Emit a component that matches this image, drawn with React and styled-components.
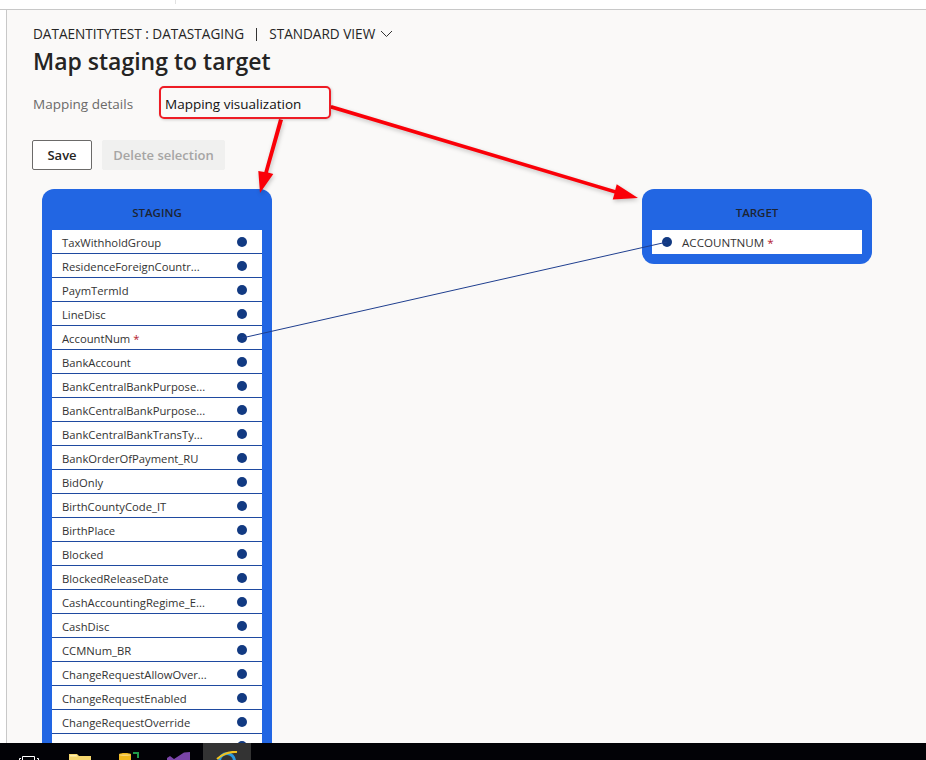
import React from "react"
import styled, { createGlobalStyle } from "styled-components"

const GlobalStyle = createGlobalStyle`
  html, body {
    margin: 0;
    padding: 0;
    background: #fff;
    font-family: "Open Sans", "Noto Sans", sans-serif;
  }
`

const Screen = styled.div`
  width: 926px;
  height: 760px;
  position: relative;
  overflow: hidden;
  display: flex;
  flex-direction: column;
  background: #fff;
`

const TopStrip = styled.div`
  height: 9px;
  flex-shrink: 0;
  padding-left: 175px;
  box-sizing: content-box;
  border-bottom: 1px solid #c8c8c8;
`

const TopTick = styled.div`
  width: 1px;
  height: 4px;
  background: #e2e2e2;
`

const Workspace = styled.div`
  flex: 1;
  min-height: 0;
  margin-left: 6px;
  border-left: 1px solid #c8c8c8;
  background: #faf9f8;
  padding: 14px 0 0 26px;
  overflow: hidden;
`

const Crumb = styled.div`
  display: flex;
  align-items: center;
  font-size: 13.6px;
  line-height: 20px;
  color: #252525;
  white-space: nowrap;
`

const CrumbDivider = styled.span`
  width: 1px;
  height: 13px;
  margin: 0 12px;
  background: #333;
`

const Title = styled.h1`
  margin: 1px 0 0;
  font-size: 23px;
  line-height: 32px;
  font-weight: 600;
  color: #252423;
`

const TabRow = styled.div`
  display: flex;
  align-items: center;
  height: 26px;
  margin-top: 14px;
  font-size: 13.5px;
`

const Tab = styled.div`
  width: ${props => props.$width}px;
  color: ${props => (props.$active ? "#111" : "#6b6a69")};
`

const ButtonRow = styled.div`
  display: flex;
  gap: 10px;
  margin: 23px 0 0 -1px;
`

const Button = styled.button`
  height: 30px;
  padding: 0;
  width: ${props => props.$width}px;
  box-sizing: border-box;
  font-family: inherit;
  font-size: 13px;
  font-weight: 600;
  border-radius: 2px;
  color: ${props => (props.disabled ? "#a6a5a4" : "#252423")};
  background: ${props => (props.disabled ? "#f0f0ef" : "#fff")};
  border: 1px solid ${props => (props.disabled ? "#f0f0ef" : "#6b6a69")};
`

const Diagram = styled.div`
  display: flex;
  align-items: flex-start;
  gap: 370px;
  margin: 19px 0 0 9px;
`

const Entity = styled.section`
  width: 230px;
  flex-shrink: 0;
  box-sizing: border-box;
  padding: 0 10px 10px;
  background: #2266e3;
  border-radius: 12px;
`

const EntityTitle = styled.h2`
  margin: 0;
  height: 41px;
  display: flex;
  align-items: flex-end;
  justify-content: center;
  padding-bottom: 9px;
  box-sizing: border-box;
  font-size: 11.5px;
  line-height: 16px;
  font-weight: 600;
  color: #1d2433;
`

const FieldList = styled.div`
  display: flex;
  flex-direction: column;
`

const Field = styled.div`
  height: 24px;
  box-sizing: border-box;
  display: flex;
  align-items: center;
  justify-content: space-between;
  padding: 0 15px 0 10px;
  background: #fff;
  border-bottom: 1px solid #1f4aa0;
  font-size: 11.25px;
  color: #333;
  white-space: nowrap;
`

const FieldName = styled.span`
  padding-top: 1px;
`

const TargetField = styled(Field)`
  justify-content: flex-start;
  padding: 0 0 0 10px;
  border-bottom: 0;
  gap: 10px;
  font-size: 11.6px;
`

const Dot = styled.span`
  width: 10px;
  height: 10px;
  border-radius: 50%;
  background: #123a82;
  flex-shrink: 0;
`

const Required = styled.span`
  color: #b3202c;
`

const Overlay = styled.svg`
  position: absolute;
  left: 0;
  top: 0;
  pointer-events: none;
`

const Callout = styled.div`
  position: absolute;
  left: 159px;
  top: 86px;
  width: 172px;
  height: 33px;
  box-sizing: border-box;
  border: 2px solid #ee1c25;
  border-radius: 5px;
  box-shadow: 1px 1px 3px rgba(0, 0, 0, 0.18);
`

const Taskbar = styled.div`
  position: absolute;
  left: 0;
  right: 0;
  bottom: 0;
  height: 17px;
  display: flex;
  gap: 1px;
  padding-left: 7px;
  background: #020206;
  overflow: hidden;
`

const TaskSlot = styled.div`
  width: 48px;
  height: 17px;
  display: flex;
  justify-content: center;
  padding-top: ${props => props.$top || 0}px;
  box-sizing: border-box;
  background: ${props => (props.$active ? "#333333" : "transparent")};
`

const stagingFields = [
  "TaxWithholdGroup",
  "ResidenceForeignCountr...",
  "PaymTermId",
  "LineDisc",
  "AccountNum",
  "BankAccount",
  "BankCentralBankPurpose...",
  "BankCentralBankPurpose...",
  "BankCentralBankTransTy...",
  "BankOrderOfPayment_RU",
  "BidOnly",
  "BirthCountyCode_IT",
  "BirthPlace",
  "Blocked",
  "BlockedReleaseDate",
  "CashAccountingRegime_E...",
  "CashDisc",
  "CCMNum_BR",
  "ChangeRequestAllowOver...",
  "ChangeRequestEnabled",
  "ChangeRequestOverride",
  "CISCompanyRegNum",
]

const App = () => {
  return (
    <Screen>
      <GlobalStyle />
      <TopStrip>
        <TopTick />
      </TopStrip>
      <Workspace>
        <Crumb>
          DATAENTITYTEST : DATASTAGING
          <CrumbDivider />
          STANDARD VIEW
          <svg width="13" height="8" viewBox="0 0 13 8" style={{ marginLeft: 5 }}>
            <path d="M1 1l5.5 5.5L12 1" fill="none" stroke="#333" strokeWidth="1" />
          </svg>
        </Crumb>
        <Title>Map staging to target</Title>
        <TabRow>
          <Tab $width={132}>Mapping details</Tab>
          <Tab $active>Mapping visualization</Tab>
        </TabRow>
        <ButtonRow>
          <Button $width={60}>Save</Button>
          <Button $width={123} disabled>Delete selection</Button>
        </ButtonRow>
        <Diagram>
          <Entity>
            <EntityTitle>STAGING</EntityTitle>
            <FieldList>
              {stagingFields.map((name, i) => (
                <Field key={i}>
                  <FieldName>
                    {name}
                    {name === "AccountNum" && <Required> *</Required>}
                  </FieldName>
                  <Dot />
                </Field>
              ))}
            </FieldList>
          </Entity>
          <Entity>
            <EntityTitle>TARGET</EntityTitle>
            <TargetField>
              <Dot />
              <span>
                ACCOUNTNUM <Required>*</Required>
              </span>
            </TargetField>
          </Entity>
        </Diagram>
      </Workspace>

      <Overlay width="926" height="760" viewBox="0 0 926 760">
        <line x1="242" y1="338" x2="667" y2="242" stroke="#1f3f8f" strokeWidth="1" />
        <g fill="#fa0008" style={{ filter: "drop-shadow(1px 2px 2px rgba(0,0,0,0.22))" }}>
          <path d="M331.5 105L330 108.5L614.5 193.5L612.7 199.5L638 198L616.7 184.3L615.2 190z" />
          <path d="M279 119L283 120L268 172.6L273.3 174L260 193L258.3 171L264.3 172z" />
        </g>
      </Overlay>
      <Callout />

      <Taskbar>
        <TaskSlot $top={13}>
          <svg width="20" height="4" viewBox="0 0 20 4" style={{ marginLeft: -4 }}>
            <path d="M3.5 4V.5h12V4M.5 4V2.5h1.500M19.500 4V2.500H18" fill="none" stroke="#fff" strokeWidth="1" />
          </svg>
        </TaskSlot>
        <TaskSlot $top={11}>
          <svg width="22" height="6" viewBox="0 0 22 6">
            <path d="M0 0h8l2 2h12v4H0z" fill="#f6d66e" />
            <path d="M1 1h6l1.500 1.500H1z" fill="#fbeeb0" />
          </svg>
        </TaskSlot>
        <TaskSlot $top={9}>
          <svg width="20" height="8" viewBox="0 0 20 8">
            <path d="M0 2.500C0 .5 12 .5 12 2.500V8H0z" fill="#f2b91d" />
            <path d="M0 2.500C0 4.500 12 4.500 12 2.500" fill="#f8d677" />
            <path d="M14 1h5v5" fill="none" stroke="#1f9a4a" strokeWidth="2" />
          </svg>
        </TaskSlot>
        <TaskSlot $top={9}>
          <svg width="23" height="8" viewBox="0 0 23 8">
            <path d="M0 6l3-2 4 3 10-6.500L23 0v8H0z" fill="#7a45a8" />
          </svg>
        </TaskSlot>
        <TaskSlot $active $top={8}>
          <svg width="22" height="9" viewBox="0 0 22 9">
            <circle cx="11" cy="10" r="7.500" fill="none" stroke="#2a9ae0" strokeWidth="3" />
            <path d="M1 8Q10 0 21 1" fill="none" stroke="#f2c21d" strokeWidth="2" />
          </svg>
        </TaskSlot>
      </Taskbar>
    </Screen>
  )
}

export default App
